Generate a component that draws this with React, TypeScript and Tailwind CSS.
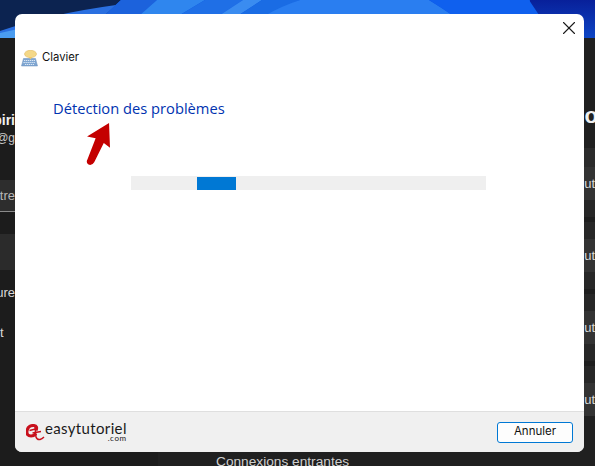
import React from 'react';
import { X } from 'lucide-react';

const rowBands = ['ut', 'ut', 'ut', 'ut'];

function Wallpaper() {
  return (
    <svg className="block w-full h-[38px]" viewBox="0 0 595 38" preserveAspectRatio="none">
      <defs>
        <linearGradient id="edge" x1="0" y1="0" x2="0" y2="1">
          <stop offset="0" stopColor="#08209a" />
          <stop offset="1" stopColor="#0d45c4" />
        </linearGradient>
      </defs>
      <rect width="595" height="38" fill="#0a55e0" />
      <rect x="530" width="65" height="38" fill="url(#edge)" />
      <path d="M0 0 H121 Q112 8 105 15 Q50 20 0 34 Z" fill="#0c2350" />
      <path d="M0 31 Q50 14 116 5 L105 15 Q50 22 0 36 Z" fill="#2a6fe0" />
      <path d="M0 38 L0 33 Q20 28 40 26 L15 38 Z" fill="#4a9cf0" />
      <path d="M121 0 H157 L140 15 L118 38 H15 Q60 24 105 15 Z" fill="#1c62dc" />
      <path d="M157 0 H205 L180 15 H140 Z" fill="#2f86ee" />
      <path d="M205 0 H243 L220 15 H180 Z" fill="#1f6fe6" />
      <path d="M243 0 H262 L239 15 H220 Z" fill="#3a8cf0" />
      <path d="M262 0 H300 L266 15 H239 Z" fill="#1a6ce4" />
      <path d="M300 0 H429 Q442 8 452 15 L460 38 H200 L266 15 Q282 6 300 0 Z" fill="#2a7ef0" />
      <path d="M429 0 H529 L539 15 L544 38 H460 Q456 22 452 15 Q442 8 429 0 Z" fill="#0f60ee" />
    </svg>
  );
}

function KeyboardIcon() {
  return (
    <svg width="17" height="17" viewBox="0 0 17 17">
      <path d="M2.500 8.500 H14.500 L16.500 16 H0.500 Z" fill="#7fa6d2" stroke="#6a8fb8" strokeWidth="0.5" />
      <path d="M3 10.500 H14 M2.500 12.500 H14.500 M4 14.500 H13" stroke="#dbe7f4" strokeWidth="1" strokeDasharray="1.300 0.700" />
      <ellipse cx="9.500" cy="4" rx="6" ry="3.700" fill="#f4d888" stroke="#dcb04e" strokeWidth="0.500" />
      <path d="M8 7 L9.500 9.500 L11 7 Z" fill="#efc866" />
    </svg>
  );
}

function RedArrow() {
  return (
    <svg width="26" height="44" viewBox="0 0 26 46">
      <path d="M23.500 0 L24.500 26 L18 21 L8 41 Q5.500 45 2 43.500 Q-1 41.500 1 38 L9.500 16 L0.500 14 Z" fill="#c40000" />
    </svg>
  );
}

function LogoMark() {
  return (
    <svg width="19" height="17" viewBox="0 0 19 17">
      <path d="M10 6.500 Q12 2 8 1.500 Q2 1 1 7 Q0.500 12 5 12 Q8 12 10 9.500" fill="none" stroke="#c8101c" strokeWidth="3" />
      <path d="M3.500 6.500 L9.500 5" stroke="#c8101c" strokeWidth="1.500" />
      <path d="M9 3 L10 13 Q11 16 14 15.500 Q16 15 18 13" fill="none" stroke="#c8101c" strokeWidth="1.500" />
      <path d="M6.500 9 L15 7.500" stroke="#c8101c" strokeWidth="1.500" />
    </svg>
  );
}

export default function App() {
  return (
    <div className="relative w-[595px] h-[466px] overflow-hidden bg-[#1e1e1e] font-['Liberation_Sans',sans-serif]">
      <Wallpaper />

      {/* settings window behind the dialog */}
      <div className="flex h-[428px]">
        <div className="w-[158px] shrink-0 bg-[#1c1c1c]">
          <div className="w-[15px] whitespace-nowrap">
            <div className="mt-[73px] h-[18px] flex items-center justify-end text-[14px] font-bold text-[#f0f0f0]">biri</div>
            <div className="mt-[1px] h-[16px] flex items-center justify-end text-[12px] text-[#c8c8c8]">@g</div>
          </div>
          <div className="w-[15px] mt-[34px] h-[32px] flex items-center justify-end bg-[#2d2d2d] border-b border-[#8a8a8a] text-[13px] text-[#b8b8b8]">tre</div>
          <div className="w-[15px] mt-[22px] h-[36px] bg-[#2b2b2b]" />
          <div className="w-[15px] whitespace-nowrap text-[13px] text-[#d8d8d8]">
            <div className="mt-[14px] h-[18px] flex items-center justify-end">ure</div>
            <div className="mt-[22px] h-[18px] flex items-center">t</div>
          </div>
        </div>

        <div className="flex-1 min-w-0 bg-[#202020] overflow-hidden">
          <div className="flex justify-end h-[110px] pt-[62px]">
            <span className="text-[22px] font-bold leading-[32px] text-[#f0f0f0] whitespace-nowrap mr-[-3px]">o</span>
          </div>
          <div className="h-[19px] bg-[#2b2b2b]" />
          <div className="flex flex-col">
            {rowBands.map((label, i) => (
              <div key={i}>
                {i > 0 && (
                  <div className="h-[39px] bg-[#272727] flex flex-col pt-[17px]">
                    <div className="h-[5px] bg-[#1e1e1e]" />
                  </div>
                )}
                <div className="h-[33px] bg-[#333333] flex items-center justify-end text-[13px] text-[#d8d8d8]">
                  <span>{label}</span>
                </div>
              </div>
            ))}
          </div>
          <div className="ml-[58px] mt-[37px] text-[13.700px] leading-[18px] text-[#cfcfcf] whitespace-nowrap">Connexions entrantes</div>
        </div>
      </div>

      {/* troubleshooter dialog */}
      <div className="absolute left-[15px] top-[14px] w-[569px] h-[438px] flex flex-col rounded-[7px] overflow-hidden bg-white font-['Open_Sans',sans-serif]">
        <div className="flex-1 min-h-0 flex flex-col">
          <div className="flex justify-end pt-[3px] pr-[4px] h-[28px]">
            <X className="w-[22px] h-[22px] text-[#1a1a1a]" strokeWidth={1.2} absoluteStrokeWidth />
          </div>
          <div className="flex items-center gap-[4px] pl-[6px] mt-[7px] h-[18px]">
            <KeyboardIcon />
            <span className="font-['Inter',sans-serif] text-[11.300px] leading-none text-[#111]">Clavier</span>
          </div>
          <div className="pl-[38px] mt-[31px] text-[14.700px] leading-[20px] text-[#0033b0]">Détection des problèmes</div>
          <div className="pl-[71px] mt-[5px] h-[44px]">
            <RedArrow />
          </div>
          <div className="ml-[116px] mt-[9px] w-[355px] h-[14px] bg-[#efefef] flex items-center pl-[66px]">
            <div className="w-[39px] h-[13px] bg-[#0078d4]" />
          </div>
        </div>
        <div className="h-[41px] shrink-0 bg-[#f0f0f0] border-t border-[#dfdfdf] flex items-center justify-between pl-[11px] pr-[11px]">
          <div className="flex items-center gap-0">
            <LogoMark />
            <div className="flex flex-col items-end font-['Lato',sans-serif] text-[#1a1a1a] -mt-[3px]">
              <span className="text-[15px] leading-[14px] tracking-[0.350px]">easytutoriel</span>
              <span className="text-[8px] leading-[6px] tracking-[0.600px]">.com</span>
            </div>
          </div>
          <button className="w-[76px] h-[21px] rounded-[3px] border border-[#0078d4] bg-[#fdfdfd] text-[11.500px] leading-none text-[#111] font-['Inter',sans-serif]">
            Annuler
          </button>
        </div>
      </div>
    </div>
  );
}
